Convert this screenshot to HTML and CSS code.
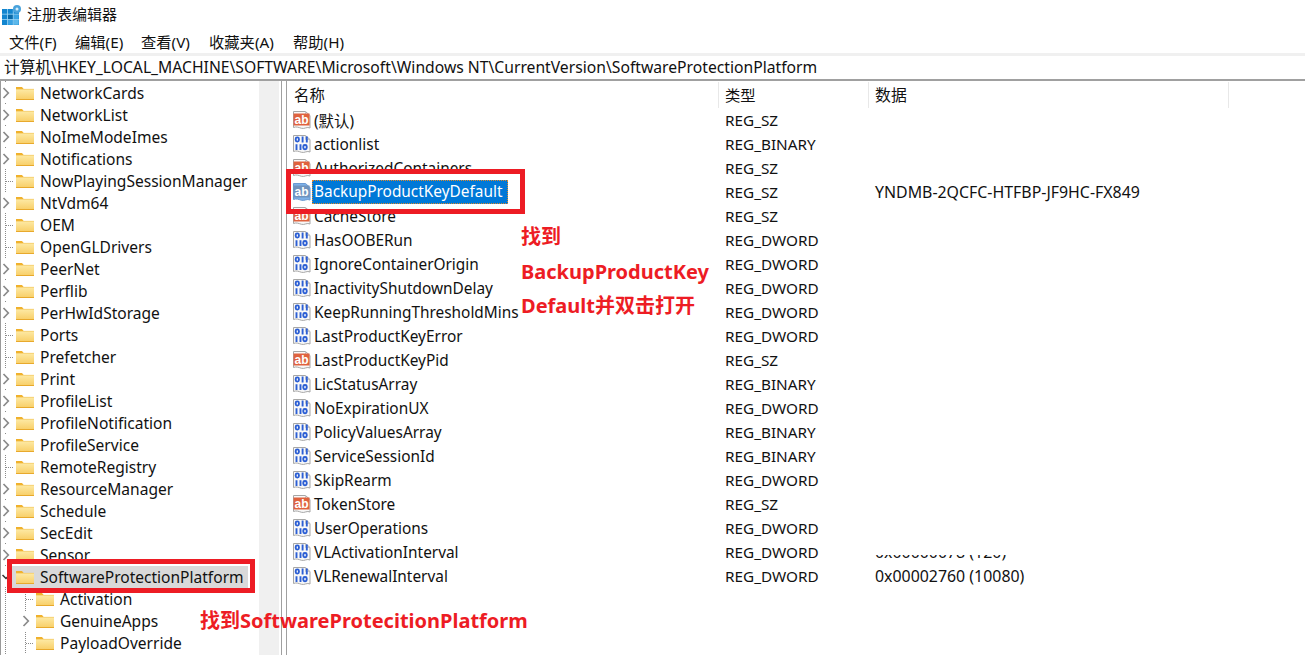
FILE: index.html
```html
<!DOCTYPE html>
<html lang="zh">
<head>
<meta charset="utf-8">
<title>注册表编辑器</title>
<link rel="stylesheet" href="styles.css">
</head>
<body>
<svg class="defs" width="0" height="0" aria-hidden="true">
  <defs>
    <linearGradient id="fold" x1="0" y1="0" x2="0" y2="1"><stop offset="0" stop-color="#fdeaa6"/><stop offset="1" stop-color="#f8cf68"/></linearGradient>
    <symbol id="folder" viewBox="0 0 20 16">
      <path d="M1 2h6l2 2.500H1z" fill="#f0b02a"/>
      <rect x="1" y="4" width="18" height="10.500" fill="url(#fold)"/>
      <path d="M1 14.500h18" stroke="#e8a92c" stroke-width="1"/>
      <path d="M1 4.300h18" stroke="#f0c050" stroke-width=".6"/>
    </symbol>
    <symbol id="paper" viewBox="0 0 20 20">
      <path d="M1.500 1.500h12l4.500 4v12.500c-3-1.600-5.500 1.200-8.500.3s-5-2-8-.8z" fill="#f8f8f8" stroke="#a6a6a6"/>
      <path d="M13.500 1.500v4h4.500" fill="none" stroke="#bdbdbd" stroke-width=".8"/>
    </symbol>
    <symbol id="ab" viewBox="0 0 20 20">
      <use href="#paper"/>
      <rect x="1.500" y="3.500" width="16" height="12" fill="#e0623e"/>
      <text x="9.500" y="13.500" class="ab-text">ab</text>
    </symbol>
    <symbol id="absel" viewBox="0 0 20 20">
      <path d="M1.500 1.500h12l4.500 4v12.500c-3-1.600-5.500 1.200-8.500.3s-5-2-8-.8z" fill="#7db0e8" stroke="#6a9ad2"/>
      <rect x="1.500" y="3.500" width="16" height="12" fill="#6f93bd"/>
      <text x="9.500" y="13.500" class="ab-text">ab</text>
    </symbol>
    <symbol id="bin" viewBox="0 0 20 20">
      <use href="#paper"/>
      <g fill="none" stroke="#2c5fd4" stroke-width="1.900">
        <rect x="3.700" y="3.400" width="3.200" height="4.200" rx="1.500"/><path d="M10.600 2.600v5.800M14.800 2.600v5.800"/>
        <path d="M4.500 10.200v5.800M8.500 10.200v5.800"/><rect x="11.300" y="11" width="3.400" height="4.200" rx="1.500"/>
      </g>
    </symbol>
    <symbol id="chev" viewBox="0 0 8 12"><path d="M1.500 1L6.300 6l-4.800 5" fill="none" stroke="#8a8a8a" stroke-width="1.700"/></symbol>
    <symbol id="chevd" viewBox="0 0 8 12"><path d="M.5 4L4 7.500 7.500 4" fill="none" stroke="#303030" stroke-width="1.500"/></symbol>
  </defs>
</svg>

<div class="window">
  <header class="titlebar">
    <svg class="appicon" width="22" height="22" viewBox="0 0 22 22">
      <rect x="2" y="6" width="17" height="16" fill="#1285cf"/>
      <rect x="8" y="11.500" width="5" height="4.800" fill="#0a6aa8"/>
      <rect x="13.700" y="16.800" width="5" height="5" fill="#5cb8ea"/>
      <rect x="8" y="16.800" width="5" height="5" fill="#3aa3e3"/>
      <rect x="13.700" y="11.500" width="5" height="4.800" fill="#3aa3e3"/>
      <path d="M7.500 6v16M13.300 6v16M2 11.200h17M2 16.500h17" stroke="#9ed6f5" stroke-width=".8"/>
      <circle cx="17" cy="6" r="4" fill="#4aa3dc"/><circle cx="17" cy="6" r="1.500" fill="#d3ecfa"/>
    </svg>
    <span>注册表编辑器</span>
  </header>
  <nav class="menubar">
    <span class="m1">文件(F)</span><span class="m2">编辑(E)</span><span class="m3">查看(V)</span><span class="m4">收藏夹(A)</span><span>帮助(H)</span>
  </nav>
  <div class="address">计算机\HKEY_LOCAL_MACHINE\SOFTWARE\Microsoft\Windows NT\CurrentVersion\SoftwareProtectionPlatform</div>
  <main class="panes">
    <aside class="tree">
      <ul class="treelist">
        <li><svg class="ch"><use href="#chev"/></svg><svg class="fo"><use href="#folder"/></svg><span class="lb">NetworkCards</span></li>
        <li><svg class="ch"><use href="#chev"/></svg><svg class="fo"><use href="#folder"/></svg><span class="lb">NetworkList</span></li>
        <li><svg class="ch"><use href="#chev"/></svg><svg class="fo"><use href="#folder"/></svg><span class="lb">NoImeModeImes</span></li>
        <li><svg class="ch"><use href="#chev"/></svg><svg class="fo"><use href="#folder"/></svg><span class="lb">Notifications</span></li>
        <li><i class="dots"></i><svg class="fo"><use href="#folder"/></svg><span class="lb">NowPlayingSessionManager</span></li>
        <li><svg class="ch"><use href="#chev"/></svg><svg class="fo"><use href="#folder"/></svg><span class="lb">NtVdm64</span></li>
        <li><i class="dots"></i><svg class="fo"><use href="#folder"/></svg><span class="lb">OEM</span></li>
        <li><i class="dots"></i><svg class="fo"><use href="#folder"/></svg><span class="lb">OpenGLDrivers</span></li>
        <li><svg class="ch"><use href="#chev"/></svg><svg class="fo"><use href="#folder"/></svg><span class="lb">PeerNet</span></li>
        <li><svg class="ch"><use href="#chev"/></svg><svg class="fo"><use href="#folder"/></svg><span class="lb">Perflib</span></li>
        <li><svg class="ch"><use href="#chev"/></svg><svg class="fo"><use href="#folder"/></svg><span class="lb">PerHwIdStorage</span></li>
        <li><i class="dots"></i><svg class="fo"><use href="#folder"/></svg><span class="lb">Ports</span></li>
        <li><i class="dots"></i><svg class="fo"><use href="#folder"/></svg><span class="lb">Prefetcher</span></li>
        <li><svg class="ch"><use href="#chev"/></svg><svg class="fo"><use href="#folder"/></svg><span class="lb">Print</span></li>
        <li><svg class="ch"><use href="#chev"/></svg><svg class="fo"><use href="#folder"/></svg><span class="lb">ProfileList</span></li>
        <li><svg class="ch"><use href="#chev"/></svg><svg class="fo"><use href="#folder"/></svg><span class="lb">ProfileNotification</span></li>
        <li><svg class="ch"><use href="#chev"/></svg><svg class="fo"><use href="#folder"/></svg><span class="lb">ProfileService</span></li>
        <li><i class="dots"></i><svg class="fo"><use href="#folder"/></svg><span class="lb">RemoteRegistry</span></li>
        <li><svg class="ch"><use href="#chev"/></svg><svg class="fo"><use href="#folder"/></svg><span class="lb">ResourceManager</span></li>
        <li><svg class="ch"><use href="#chev"/></svg><svg class="fo"><use href="#folder"/></svg><span class="lb">Schedule</span></li>
        <li><svg class="ch"><use href="#chev"/></svg><svg class="fo"><use href="#folder"/></svg><span class="lb">SecEdit</span></li>
        <li><svg class="ch"><use href="#chev"/></svg><svg class="fo"><use href="#folder"/></svg><span class="lb">Sensor</span></li>
        <li><svg class="ch"><use href="#chevd"/></svg><span class="selwrap"><svg class="fo"><use href="#folder"/></svg><span class="lb">SoftwareProtectionPlatform</span></span></li>
        <li class="child"><i class="dots"></i><svg class="fo"><use href="#folder"/></svg><span class="lb">Activation</span></li>
        <li class="child"><svg class="ch"><use href="#chev"/></svg><svg class="fo"><use href="#folder"/></svg><span class="lb">GenuineApps</span></li>
        <li class="child"><i class="dots"></i><svg class="fo"><use href="#folder"/></svg><span class="lb">PayloadOverride</span></li>
      </ul>
      <div class="scrolltrack"></div>
    </aside>
    <section class="values">
      <div class="row head"><span class="c1">名称</span><span class="c2">类型</span><span class="c3">数据</span></div>
      <div class="row"><span class="c1"><svg class="ic"><use href="#ab"/></svg>(默认)</span><span class="c2">REG_SZ</span><span class="c3"></span></div>
      <div class="row"><span class="c1"><svg class="ic"><use href="#bin"/></svg>actionlist</span><span class="c2">REG_BINARY</span><span class="c3"></span></div>
      <div class="row"><span class="c1"><svg class="ic"><use href="#ab"/></svg>AuthorizedContainers</span><span class="c2">REG_SZ</span><span class="c3"></span></div>
      <div class="row"><span class="c1"><svg class="ic"><use href="#absel"/></svg><span class="picked">BackupProductKeyDefault</span></span><span class="c2">REG_SZ</span><span class="c3">YNDMB-2QCFC-HTFBP-JF9HC-FX849</span></div>
      <div class="row"><span class="c1"><svg class="ic"><use href="#ab"/></svg>CacheStore</span><span class="c2">REG_SZ</span><span class="c3"></span></div>
      <div class="row"><span class="c1"><svg class="ic"><use href="#bin"/></svg>HasOOBERun</span><span class="c2">REG_DWORD</span><span class="c3"></span></div>
      <div class="row"><span class="c1"><svg class="ic"><use href="#bin"/></svg>IgnoreContainerOrigin</span><span class="c2">REG_DWORD</span><span class="c3"></span></div>
      <div class="row"><span class="c1"><svg class="ic"><use href="#bin"/></svg>InactivityShutdownDelay</span><span class="c2">REG_DWORD</span><span class="c3"></span></div>
      <div class="row"><span class="c1"><svg class="ic"><use href="#bin"/></svg>KeepRunningThresholdMins</span><span class="c2">REG_DWORD</span><span class="c3"></span></div>
      <div class="row"><span class="c1"><svg class="ic"><use href="#bin"/></svg>LastProductKeyError</span><span class="c2">REG_DWORD</span><span class="c3"></span></div>
      <div class="row"><span class="c1"><svg class="ic"><use href="#ab"/></svg>LastProductKeyPid</span><span class="c2">REG_SZ</span><span class="c3"></span></div>
      <div class="row"><span class="c1"><svg class="ic"><use href="#bin"/></svg>LicStatusArray</span><span class="c2">REG_BINARY</span><span class="c3"></span></div>
      <div class="row"><span class="c1"><svg class="ic"><use href="#bin"/></svg>NoExpirationUX</span><span class="c2">REG_DWORD</span><span class="c3"></span></div>
      <div class="row"><span class="c1"><svg class="ic"><use href="#bin"/></svg>PolicyValuesArray</span><span class="c2">REG_BINARY</span><span class="c3"></span></div>
      <div class="row"><span class="c1"><svg class="ic"><use href="#bin"/></svg>ServiceSessionId</span><span class="c2">REG_BINARY</span><span class="c3"></span></div>
      <div class="row"><span class="c1"><svg class="ic"><use href="#bin"/></svg>SkipRearm</span><span class="c2">REG_DWORD</span><span class="c3"></span></div>
      <div class="row"><span class="c1"><svg class="ic"><use href="#ab"/></svg>TokenStore</span><span class="c2">REG_SZ</span><span class="c3"></span></div>
      <div class="row"><span class="c1"><svg class="ic"><use href="#bin"/></svg>UserOperations</span><span class="c2">REG_DWORD</span><span class="c3"></span></div>
      <div class="row"><span class="c1"><svg class="ic"><use href="#bin"/></svg>VLActivationInterval</span><span class="c2">REG_DWORD</span><span class="c3 wiped">0x00000078 (120)</span></div>
      <div class="row"><span class="c1"><svg class="ic"><use href="#bin"/></svg>VLRenewalInterval</span><span class="c2">REG_DWORD</span><span class="c3">0x00002760 (10080)</span></div>
    </section>
  </main>
  <div class="frame frame-tree"></div>
  <div class="frame frame-value"></div>
  <div class="note note-a">找到<br>BackupProductKey<br>Default并双击打开</div>
  <div class="note note-b">找到SoftwareProtecitionPlatform</div>
</div>
</body>
</html>
```
FILE: styles.css
```css
html, body { margin: 0; padding: 0; }
body { width: 1305px; height: 655px; overflow: hidden; background: #fff; color: #111; font-family: "Noto Sans", "Noto Sans CJK SC", sans-serif; font-size: 15px; }
.defs { position: absolute; }
.window { position: relative; width: 1305px; height: 655px; overflow: hidden; }
.titlebar { height: 30px; box-sizing: border-box; padding-bottom: 3px; display: flex; align-items: center; gap: 5px; font-size: 15px; }
.appicon { flex: none; }
.menubar { height: 23px; box-sizing: border-box; padding: 0 0 2px 9px; display: flex; align-items: center; font-size: 15.3px; }
.menubar span { flex: none; }
.m1 { width: 66px; } .m2 { width: 66px; } .m3 { width: 68px; } .m4 { width: 84px; }
.address { height: 26px; border-top: 3px solid #f0f0f0; padding-left: 4px; line-height: 22px; white-space: nowrap; box-sizing: border-box; font-size: 15.7px; }
.panes { display: flex; height: 576px; border-top: 2px solid #a0a0a0; box-sizing: border-box; }
.tree { width: 282px; flex: none; display: flex; border-left: 1px solid #9a9a9a; border-right: 1px solid #a0a0a0; box-sizing: border-box; overflow: hidden; font-size: 15.55px; }
.treelist { list-style: none; margin: 0; padding: 1px 0 0; width: 258px; flex: none; background: linear-gradient(#8a8a8a 50%, transparent 50%) 4px 0 / 1px 2px repeat-y; }
.treelist li { height: 22px; display: flex; align-items: center; white-space: nowrap; }
.treelist li.child { padding-left: 20px; background: linear-gradient(#8a8a8a 50%, transparent 50%) 24px 0 / 1px 2px repeat-y; }
.ch { width: 8px; height: 20px; margin: 0 5px 0 1px; flex: none; background: #fff; }
.dots { display: block; width: 12px; height: 1px; margin: 0 1px 0 1px; flex: none; background: repeating-linear-gradient(90deg, #8a8a8a 0 1px, transparent 1px 2px) 4px 0 / 8px 1px no-repeat; }
.fo { width: 20px; height: 16px; flex: none; margin-right: 3px; }
.lb { padding: 0 2px; line-height: 21px; }
.selwrap { display: flex; align-items: center; height: 22px; background: #d9d9d9; margin-left: -5px; padding-left: 5px; padding-right: 2px; }
.scrolltrack { width: 20px; flex: none; background: #f0f0f0; }
.values { flex: 1; border-left: 1px solid #a0a0a0; margin-left: 4px; }
.row { height: 24px; display: flex; align-items: center; white-space: nowrap; }
.row.head { height: 26px; margin-top: 1px; font-size: 15px; }
.row.head span { align-self: stretch; line-height: 27px; border-right: 1px solid #e8e8e8; box-sizing: border-box; }
.row.head .c1 { padding-left: 7px; }
.c1 { width: 432px; padding-left: 5px; box-sizing: border-box; display: flex; align-items: center; flex: none; overflow: hidden; font-size: 15.4px; }
.c2 { width: 150px; padding-left: 6px; box-sizing: border-box; flex: none; font-size: 15.3px; }
.c3 { width: 360px; padding-left: 6px; box-sizing: border-box; flex: none; font-size: 15.9px; }
.ic { width: 20px; height: 20px; margin-right: 2px; flex: none; }
.ab-text { font: bold 12px "Liberation Sans", sans-serif; fill: #fff; text-anchor: middle; }
.picked { background: #0078d7; color: #fff; outline: 1px dotted #e08a2a; outline-offset: -1px; margin-left: -2px; padding: 0 6px 0 2px; line-height: 24px; height: 24px; display: block; }
.wiped { clip-path: inset(14px 0 0 0); }
.frame { position: absolute; border: 5px solid #ed1c24; box-sizing: border-box; }
.frame-tree { left: 7px; top: 559px; width: 248px; height: 34px; }
.frame-value { left: 286px; top: 169px; width: 239px; height: 45px; }
.note { position: absolute; color: #ed1c24; font-weight: 700; font-size: 20px; white-space: nowrap; }
.note-a { left: 521px; top: 220px; line-height: 34.5px; }
.note-b { left: 200px; top: 606px; line-height: 30px; }
```
